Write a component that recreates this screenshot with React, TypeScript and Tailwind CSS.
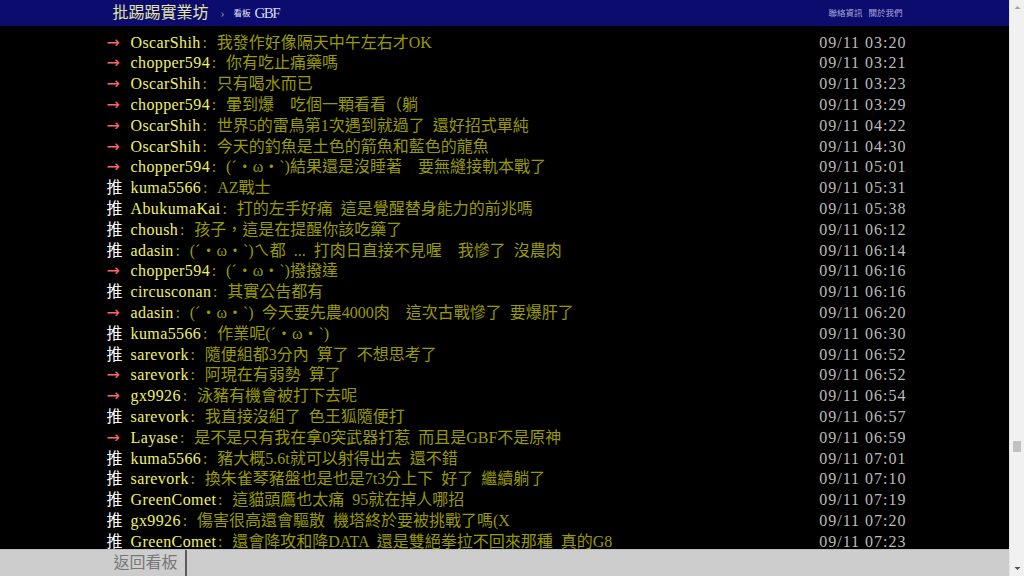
const pushes: [string, string, string, string][] = [
  ['→', 'OscarShih', '我發作好像隔天中午左右才OK', '09/11 03:20'],
  ['→', 'chopper594', '你有吃止痛藥嗎', '09/11 03:21'],
  ['→', 'OscarShih', '只有喝水而已', '09/11 03:23'],
  ['→', 'chopper594', '暈到爆　吃個一顆看看（躺', '09/11 03:29'],
  ['→', 'OscarShih', '世界5的雷鳥第1次遇到就過了 還好招式單純', '09/11 04:22'],
  ['→', 'OscarShih', '今天的釣魚是土色的箭魚和藍色的龍魚', '09/11 04:30'],
  ['→', 'chopper594', '(ˊ・ω・ˋ)結果還是沒睡著　要無縫接軌本戰了', '09/11 05:01'],
  ['推', 'kuma5566', 'AZ戰士', '09/11 05:31'],
  ['推', 'AbukumaKai', '打的左手好痛 這是覺醒替身能力的前兆嗎', '09/11 05:38'],
  ['推', 'choush', '孩子，這是在提醒你該吃藥了', '09/11 06:12'],
  ['推', 'adasin', '(ˊ・ω・ˋ)ㄟ都 ... 打肉日直接不見喔　我慘了 沒農肉', '09/11 06:14'],
  ['→', 'chopper594', '(ˊ・ω・ˋ)撥撥達', '09/11 06:16'],
  ['推', 'circusconan', '其實公告都有', '09/11 06:16'],
  ['→', 'adasin', '(ˊ・ω・ˋ) 今天要先農4000肉　這次古戰慘了 要爆肝了', '09/11 06:20'],
  ['推', 'kuma5566', '作業呢(ˊ・ω・ˋ)', '09/11 06:30'],
  ['推', 'sarevork', '隨便組都3分內 算了 不想思考了', '09/11 06:52'],
  ['→', 'sarevork', '阿現在有弱勢 算了', '09/11 06:52'],
  ['→', 'gx9926', '泳豬有機會被打下去呢', '09/11 06:54'],
  ['推', 'sarevork', '我直接沒組了 色王狐隨便打', '09/11 06:57'],
  ['→', 'Layase', '是不是只有我在拿0突武器打惹 而且是GBF不是原神', '09/11 06:59'],
  ['推', 'kuma5566', '豬大概5.6t就可以射得出去 還不錯', '09/11 07:01'],
  ['推', 'sarevork', '換朱雀琴豬盤也是也是7t3分上下 好了 繼續躺了', '09/11 07:10'],
  ['推', 'GreenComet', '這貓頭鷹也太痛 95就在掉人哪招', '09/11 07:19'],
  ['推', 'gx9926', '傷害很高還會驅散 機塔終於要被挑戰了嗎(X', '09/11 07:20'],
  ['推', 'GreenComet', '還會降攻和降DATA 還是雙絕拳拉不回來那種 真的G8', '09/11 07:23'],
];

export default function App() {
  return (
    <div className="flex h-[576px] w-[1024px] overflow-hidden bg-black font-['Liberation_Serif','Noto_Sans_CJK_TC',serif]">
      <div className="flex flex-1 flex-col">
        {/* Top bar */}
        <div className="h-[26px] shrink-0 bg-[#0c0c6e]">
          <div className="mx-auto flex h-full w-[800px] items-center justify-between">
            <div className="flex items-center pl-[8px]">
              <span className="text-[16px] leading-none text-[#e4e4a2]">批踢踢實業坊</span>
              <span className="ml-[12px] text-[12px] leading-none text-[#9a9ac0]">›</span>
              <span className="ml-[9px] text-[8.5px] leading-none text-[#e8e8f8]">看板</span>
              <span className="ml-[4px] text-[15px] leading-none tracking-[-1.5px] text-[#d8d8f0]">GBF</span>
            </div>
            <div className="flex gap-[6px] pr-[2px] text-[8.5px] leading-none text-[#a8a8dc]">
              <span>聯絡資訊</span>
              <span>關於我們</span>
            </div>
          </div>
        </div>

        {/* Pushes */}
        <div className="min-h-0 flex-1 overflow-hidden pt-[6.6px]">
          <div className="mx-auto w-[804px] pl-[4px] text-[16px]">
            {pushes.map(([tag, user, text, time], i) => (
              <div key={i} className="flex h-[20.8px] items-center whitespace-pre leading-[20.8px]">
                <span
                  className={`inline-block w-[24px] font-['DejaVu_Sans','Noto_Sans_CJK_TC',sans-serif] ${
                    tag === '推' ? 'text-white' : 'text-[#ff6666]'
                  }`}
                >
                  {tag}
                </span>
                <span className="tracking-[0.4px] text-[#f0f06c]">{user}</span>
                <span className="inline-block w-[8px] text-center text-[#999900]">:</span>
                <span className="ml-[8px] text-[#999900] [word-spacing:4px]">{text}</span>
                <span className="ml-auto tracking-[1px] text-[#bbbbbb]">{time}</span>
              </div>
            ))}
          </div>
        </div>

        {/* Bottom bar */}
        <div className="h-[27px] shrink-0 border-t border-[#bdbdbd] bg-[#cdcdcd]">
          <div className="mx-auto flex h-full w-[800px]">
            <div className="flex items-center border-r-2 border-[#5a5a5a] pl-[9px] pr-[7px] text-[16px] text-[#777777]">
              返回看板
            </div>
          </div>
        </div>
      </div>

      {/* Scrollbar */}
      <div className="flex w-[15px] shrink-0 flex-col items-center border-l border-[#e6e6e6] bg-[#f1f1f1]">
        <svg width="15" height="15" viewBox="0 0 15 15" className="shrink-0">
          <path d="M4.5 9 L7.5 6 L10.5 9 Z" fill="#a3a3a3" />
        </svg>
        <div className="mt-[426px] h-[11px] w-[8px] bg-[#c1c1c1]" />
        <div className="flex-1" />
        <svg width="15" height="15" viewBox="0 0 15 15" className="shrink-0">
          <path d="M4.5 6 L7.5 9 L10.5 6 Z" fill="#505050" />
        </svg>
      </div>
    </div>
  );
}
